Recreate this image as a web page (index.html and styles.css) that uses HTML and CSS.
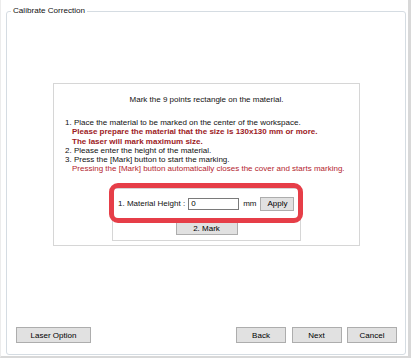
FILE: index.html
```html
<!DOCTYPE html>
<html>
<head>
  <meta charset="UTF-8">
  <title>Calibrate Correction</title>
  <link rel="stylesheet" href="styles.css">
</head>
<body>
<div class="window">
  <fieldset class="group">
    <legend>Calibrate Correction</legend>
    <div class="panel">
      <p class="title">Mark the 9 points rectangle on the material.</p>
      <div class="steps">
        <p>1. Place the material to be marked on the center of the workspace.</p>
        <p class="warn strong">Please prepare the material that the size is 130x130 mm or more.</p>
        <p class="warn strong">The laser will mark maximum size.</p>
        <p>2. Please enter the height of the material.</p>
        <p>3. Press the [Mark] button to start the marking.</p>
        <p class="warn">Pressing the [Mark] button automatically closes the cover and starts marking.</p>
      </div>
      <div class="action">
        <div class="height_row">
          <span class="label">1. Material Height :</span>
          <input class="field" type="text" value="0">
          <span class="unit">mm</span>
          <button class="btn btn_apply">Apply</button>
        </div>
        <button class="btn btn_mark">2. Mark</button>
        <div class="highlight"></div>
      </div>
    </div>
    <div class="footer">
      <button class="btn btn_option">Laser Option</button>
      <div class="nav">
        <button class="btn btn_nav">Back</button>
        <button class="btn btn_nav">Next</button>
        <button class="btn btn_nav">Cancel</button>
      </div>
    </div>
  </fieldset>
</div>
</body>
</html>
```

FILE: styles.css
```css
* {
  margin: 0;
  padding: 0;
  box-sizing: border-box;
}
body {
  background: #fff;
  font-family: "Liberation Sans", Arial, sans-serif;
  font-size: 8px;
  color: #111;
}
.window {
  display: flex;
  flex-direction: column;
  width: 411px;
  height: 358px;
  padding: 5px 2px 1px 6px;
  border-left: 1px solid #ececec;
  border-right: 3px solid #d8d8d8;
  border-bottom: 2px solid #d8d8d8;
  background: #fff;
}
.group {
  display: flex;
  flex-direction: column;
  flex: 1;
  margin-left: -1px;
  border: 1px solid #d5dce2;
  border-radius: 3px;
}
.group legend {
  margin-left: 4px;
  padding: 0 2px;
  line-height: 12px;
  font-size: 8.1px;
  color: #111;
}
.panel {
  width: 307px;
  height: 163px;
  margin: 66px 0 0 46px;
  border: 1px solid #d6d6d6;
  background: #fff;
}
.panel .title {
  padding-top: 11px;
  line-height: 10px;
  text-align: center;
}
.steps {
  margin-top: 13px;
  padding-left: 11px;
  line-height: 9.3px;
}
.steps .warn {
  padding-left: 7px;
  color: #b3242e;
}
.steps .strong {
  font-weight: bold;
  color: #9c1a24;
}
.action {
  position: relative;
  display: flex;
  flex-direction: column;
  align-items: center;
  width: 189px;
  height: 53px;
  margin: 14px 0 0 58px;
  padding-top: 8px;
  border: 1px solid #d6d6d6;
}
.height_row {
  display: flex;
  align-items: center;
  align-self: flex-start;
  height: 14px;
  padding-left: 5px;
}
.height_row .field {
  width: 51px;
  height: 12px;
  margin-left: 3px;
  padding-left: 2px;
  border: 1px solid #7a7a7a;
  font-family: inherit;
  font-size: 8px;
  color: #000;
  outline: none;
}
.height_row .unit {
  margin-left: 4px;
}
.btn {
  border: 1px solid #adadad;
  background: #e1e1e1;
  font-family: inherit;
  font-size: 8px;
  color: #000;
}
.btn_apply {
  width: 34px;
  height: 14px;
  margin-left: 4px;
}
.btn_mark {
  width: 62px;
  height: 13px;
  margin-top: 11px;
}
.highlight {
  position: absolute;
  left: -4px;
  top: -6px;
  width: 194px;
  height: 40px;
  border: 5px solid #e63e48;
  border-radius: 9px;
}
.footer {
  display: flex;
  justify-content: space-between;
  align-items: center;
  margin-top: auto;
  padding: 0 8px 11px 9px;
}
.btn_option {
  width: 75px;
  height: 16px;
}
.nav {
  display: flex;
  gap: 5.5px;
}
.btn_nav {
  width: 50px;
  height: 16px;
}
```
